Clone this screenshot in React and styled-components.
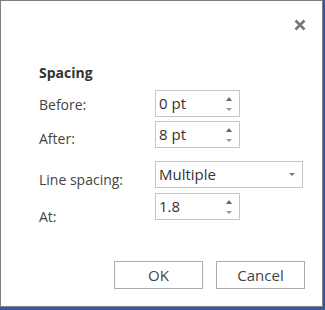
import React from "react";
import styled, { createGlobalStyle } from "styled-components";

const Global = createGlobalStyle`
  html, body { margin: 0; padding: 0; background: #2f5aa6; }
  body { width: 325px; height: 310px; overflow: hidden; font-family: "Open Sans", "Noto Sans", Arial, sans-serif; }
`;

const Dialog = styled.div`
  box-sizing: border-box;
  width: 323px;
  height: 307px;
  background: #fff;
  border: 1px solid #7f7f7f;
  display: flex;
  flex-direction: column;
  position: relative;
  color: #444;
`;

const Close = styled.button`
  position: absolute;
  top: 17px;
  right: 15px;
  width: 14px;
  height: 14px;
  padding: 0;
  border: 0;
  background: none;
  display: flex;
  align-items: center;
  justify-content: center;
`;

const Body = styled.div`
  padding: 62px 0 0 38px;
  display: flex;
  flex-direction: column;
`;

const Title = styled.div`
  font-weight: 700;
  font-size: 14px;
  line-height: 20px;
  color: #333;
  margin-bottom: 7px;
`;

const Row = styled.div`
  display: grid;
  grid-template-columns: 116px auto;
  align-items: start;
  margin-top: ${(p) => p.$gap || 0}px;
`;

const Label = styled.div`
  font-size: 14px;
  line-height: 20px;
  color: #444;
  padding-top: ${(p) => p.$offset || 0}px;
`;

const Field = styled.div`
  box-sizing: border-box;
  width: ${(p) => p.$w}px;
  height: 27px;
  border: 1px solid #c6c6c6;
  display: flex;
  align-items: center;
  justify-content: space-between;
  padding: 0 7px 1px 3px;
  font-size: 15px;
  color: #333;
`;

const Spin = styled.div`
  display: flex;
  flex-direction: column;
  gap: 7px;
  padding-top: 1px;
`;

const Footer = styled.div`
  display: flex;
  justify-content: flex-end;
  gap: 13px;
  padding: 0 17px 0 0;
  margin-top: auto;
  margin-bottom: 17px;
`;

const Button = styled.button`
  box-sizing: border-box;
  width: 89px;
  height: 28px;
  border: 1px solid #ababab;
  background: #fff;
  font-family: "Open Sans", "Noto Sans", Arial, sans-serif;
  font-size: 15px;
  color: #444;
  padding: 0 0 1px;
`;

const Up = () => (
  <svg width="6" height="4" viewBox="0 0 6 4"><path d="M0 4 L3 0 L6 4 Z" fill="#666" /></svg>
);
const Down = () => (
  <svg width="6" height="3" viewBox="0 0 6 3"><path d="M0 0 L6 0 L3 3 Z" fill="#999" /></svg>
);

const Spinner = ({ value }) => (
  <Field $w={85}>
    <span>{value}</span>
    <Spin><Up /><Down /></Spin>
  </Field>
);

export default function App() {
  return (
    <>
      <Global />
      <Dialog>
        <Close aria-label="Close">
          <svg width="12" height="12" viewBox="0 0 12 12">
            <path d="M1.5 1.5 L10.5 10.5 M10.5 1.5 L1.5 10.5" stroke="#777" strokeWidth="2.6" strokeLinecap="butt" />
          </svg>
        </Close>
        <Body>
          <Title>Spacing</Title>
          <Row>
            <Label $offset={5}>Before:</Label>
            <Spinner value="0 pt" />
          </Row>
          <Row $gap={4}>
            <Label $offset={8}>After:</Label>
            <Spinner value="8 pt" />
          </Row>
          <Row $gap={12}>
            <Label $offset={9}>Line spacing:</Label>
            <Field $w={148}>
              <span>Multiple</span>
              <svg width="6" height="3" viewBox="0 0 6 3"><path d="M0 0 L6 0 L3 3 Z" fill="#777" /></svg>
            </Field>
          </Row>
          <Row $gap={3}>
            <Label $offset={14}>At:</Label>
            <Spinner value="1.8" />
          </Row>
        </Body>
        <Footer>
          <Button>OK</Button>
          <Button>Cancel</Button>
        </Footer>
      </Dialog>
    </>
  );
}
